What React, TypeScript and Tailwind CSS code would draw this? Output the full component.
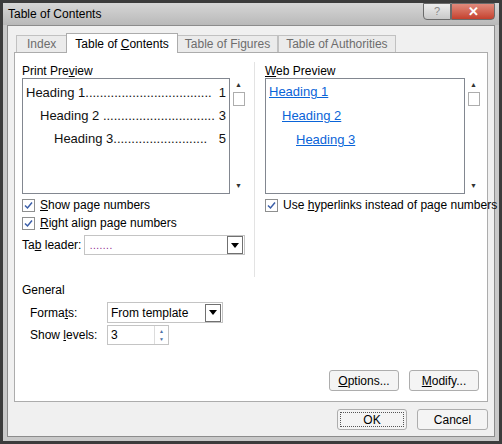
const F = { fontFamily: '"Liberation Sans", "Noto Sans", sans-serif' };

function Check({ u, rest, pre = '' }: { u: string; rest: string; pre?: string }) {
  return (
    <div className="flex items-center gap-[5px] h-[18px] whitespace-nowrap">
      <span className="w-[13px] h-[13px] shrink-0 border border-[#8e8f8f] bg-white flex items-center justify-center">
        <svg width="9" height="9" viewBox="0 0 9 9"><path d="M1 4.5 L3.5 7 L8 1.5" fill="none" stroke="#3b5ea8" strokeWidth="1.5" /></svg>
      </span>
      <span>{pre}<u>{u}</u>{rest}</span>
    </div>
  );
}

function Scroll() {
  return (
    <div className="w-[13px] h-[115px] flex flex-col items-center justify-between py-[2px] text-[7px] text-[#333]">
      <div className="flex flex-col items-center">
        <span>▲</span>
        <div className="w-[12px] h-[14px] border border-[#adadad] bg-white mt-[1px]" />
      </div>
      <span>▼</span>
    </div>
  );
}

function DropBtn() {
  return (
    <span className="w-[16px] h-[18px] border border-[#707070] bg-white flex items-center justify-center">
      <svg width="8" height="5" viewBox="0 0 8 5"><path d="M0 0h8L4 5z" fill="#000" /></svg>
    </span>
  );
}

function Btn({ children, w, cls = '' }: { children: React.ReactNode; w: string; cls?: string }) {
  return (
    <button className={`${w} h-[21px] rounded-[3px] border border-[#adadad] bg-[#f4f4f4] text-[12px] ${cls}`}>{children}</button>
  );
}

export default function App() {
  return (
    <div style={F} className="w-[502px] h-[444px] bg-[#3c3c3c] p-[3px] text-[12px] text-black">
      <div className="h-full bg-[#c9c9c9] rounded-t-[4px] flex flex-col">
        <div className="h-[22px] flex items-start justify-between pl-[5px] bg-gradient-to-b from-[#d6d6d6] to-[#b9b9b9]">
          <span className="text-[12px] mt-[2px]">Table of Contents</span>
          <div className="flex mr-[4px]">
            <span className="w-[28px] h-[17px] rounded-bl-[4px] border border-[#6b6b6b] bg-gradient-to-b from-[#eee] to-[#c8c8c8] text-[#888] text-[11px] flex items-center justify-center">?</span>
            <span className="w-[44px] h-[17px] rounded-br-[4px] border border-[#6b6b6b] bg-gradient-to-b from-[#e08a7c] to-[#c4402d] text-white text-[13px] font-bold flex items-center justify-center">✕</span>
          </div>
        </div>
        <div className="flex-1 mx-[4px] mb-[4px] bg-[#f0f0f0] border border-[#8c8c8c] pt-[7px] px-[6px] flex flex-col">
          <div className="flex items-end h-[20px] pl-[2px] text-[#6d6d6d] whitespace-nowrap">
            <span className="h-[18px] px-[10px] border border-[#c1c1c1] bg-[#ebebeb] flex items-center">Index</span>
            <span className="h-[20px] px-[8px] border border-[#acacac] border-b-0 bg-white text-black flex items-center -mx-[1px] z-10">Table of&nbsp;<u>C</u>ontents</span>
            <span className="h-[18px] px-[7px] border border-[#c1c1c1] bg-[#ebebeb] flex items-center">Table of Figures</span>
            <span className="h-[18px] px-[7px] border border-[#c1c1c1] bg-[#ebebeb] flex items-center">Table of Authorities</span>
          </div>
          <div className="h-[350px] bg-white border border-[#acacac] -mt-[1px] px-[7px] pt-[9px] flex flex-col">
            <div className="flex">
              <div className="w-[233px] shrink-0 pr-[9px] border-r border-[#e3e3e3] h-[215px]">
                <div className="h-[16px]">Print Pre<u>v</u>iew</div>
                <div className="flex gap-[2px]">
                  <div className="w-[208px] h-[116px] border border-[#828790] px-[3px] pt-[2px] text-[13px] leading-[23px] text-[#111] whitespace-nowrap overflow-hidden">
                    <div className="flex justify-between"><span>Heading 1...................................</span><span>1</span></div>
                    <div className="flex justify-between pl-[14px]"><span>Heading 2 ...............................</span><span>3</span></div>
                    <div className="flex justify-between pl-[28px]"><span>Heading 3..........................</span><span>5</span></div>
                  </div>
                  <Scroll />
                </div>
                <div className="mt-[2px]">
                  <Check u="S" rest="how page numbers" />
                  <Check u="R" rest="ight align page numbers" />
                </div>
                <div className="flex items-center mt-[3px]">
                  <span className="w-[62px] whitespace-nowrap">Ta<u>b</u> leader:</span>
                  <div className="w-[162px] h-[20px] border border-[#c4c4c4] flex items-center justify-between pl-[5px] pr-[1px]">
                    <span className="text-[#8b1a8b] text-[10px] tracking-[0.5px]">.......</span>
                    <DropBtn />
                  </div>
                </div>
              </div>
              <div className="pl-[10px] flex-1">
                <div className="h-[16px]"><u>W</u>eb Preview</div>
                <div className="flex gap-[2px]">
                  <div className="w-[200px] h-[116px] border border-[#828790] px-[3px] pt-[1px] text-[13px] leading-[24px] text-[#0a64d8] underline">
                    <div>Heading 1</div>
                    <div className="pl-[13px]">Heading 2</div>
                    <div className="pl-[27px]">Heading 3</div>
                  </div>
                  <Scroll />
                </div>
                <div className="mt-[2px]"><Check u="h" pre="Use " rest="yperlinks instead of page numbers" /></div>
              </div>
            </div>
            <div className="mt-[4px] h-[18px]">General</div>
            <div className="pl-[8px] mt-[3px]">
              <div className="flex items-center">
                <span className="w-[77px]">Forma<u>t</u>s:</span>
                <div className="w-[116px] h-[21px] border border-[#c4c4c4] flex items-center justify-between pl-[3px] pr-[1px]">
                  <span>From template</span><DropBtn />
                </div>
              </div>
              <div className="flex items-center mt-[2px]">
                <span className="w-[77px]">Show <u>l</u>evels:</span>
                <div className="w-[62px] h-[20px] border border-[#c4c4c4] flex items-center justify-between pl-[3px]">
                  <span>3</span>
                  <span className="w-[14px] h-full border-l border-[#dcdcdc] flex flex-col items-center justify-center text-[5px] text-[#4a6fa5] leading-[8px]"><span>▲</span><span>▼</span></span>
                </div>
              </div>
            </div>
            <div className="flex-1" />
            <div className="flex justify-end gap-[10px] pb-[10px] pr-[1px]">
              <Btn w="w-[70px]"><u>O</u>ptions...</Btn>
              <Btn w="w-[70px]"><u>M</u>odify...</Btn>
            </div>
          </div>
          <div className="flex justify-end gap-[10px] mt-[7px]">
            <Btn w="w-[70px]" cls="border-[#3c9ee0] outline-1 outline-dotted outline-[#555] -outline-offset-[4px]">OK</Btn>
            <Btn w="w-[71px]">Cancel</Btn>
          </div>
        </div>
      </div>
    </div>
  );
}
